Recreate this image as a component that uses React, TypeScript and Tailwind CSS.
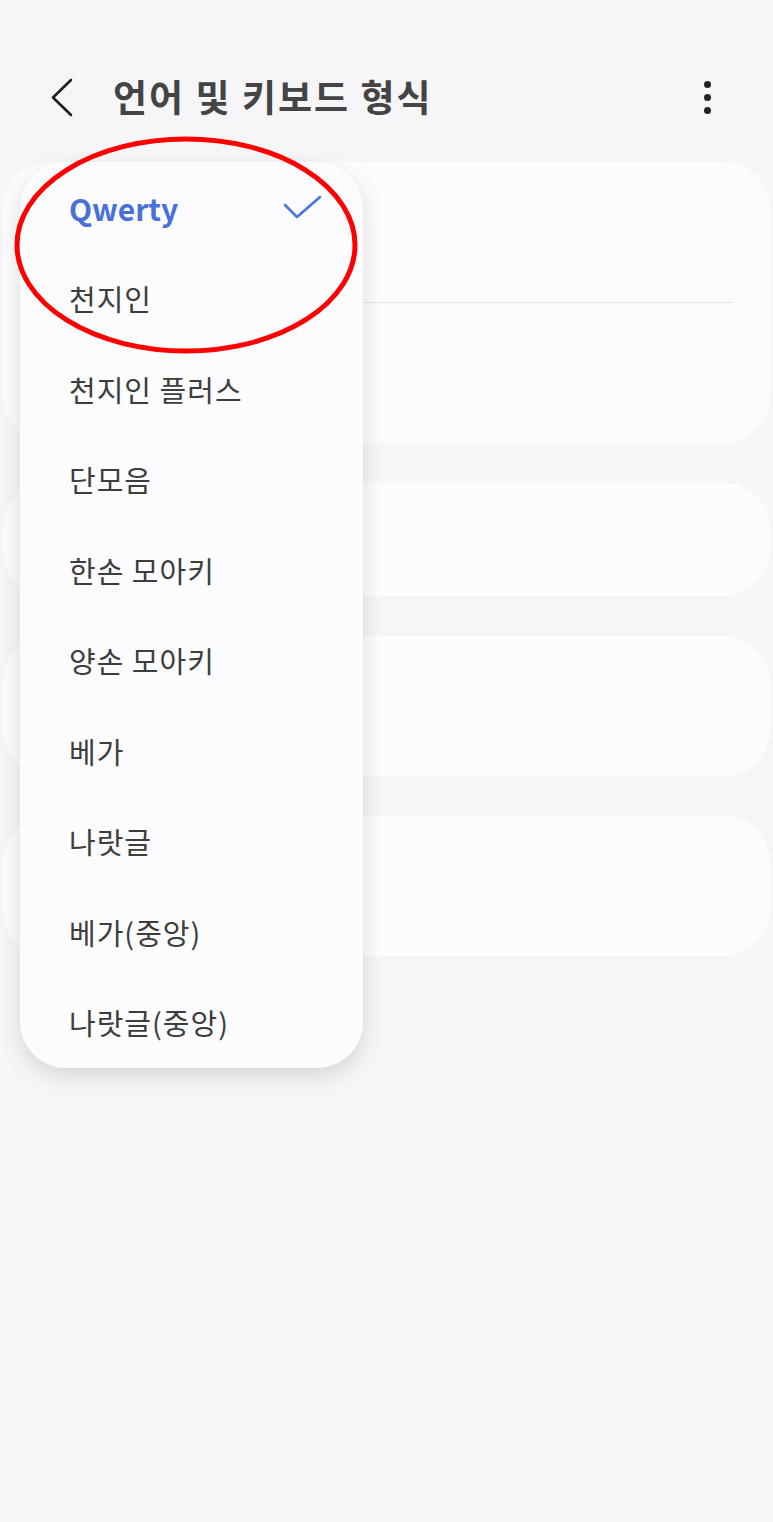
import React from "react"

const font = { fontFamily: '"Noto Sans CJK KR", "Noto Sans", sans-serif' }

const options = [
  "Qwerty",
  "천지인",
  "천지인 플러스",
  "단모음",
  "한손 모아키",
  "양손 모아키",
  "베가",
  "나랏글",
  "베가(중앙)",
  "나랏글(중앙)",
]

function Header() {
  return (
    <div className="mt-[62px] flex h-[70px] items-center">
      <button className="ml-[46px] flex h-[48px] w-[36px] items-center justify-center">
        <svg width="30" height="40" viewBox="0 0 30 40" fill="none">
          <path d="M22 3 L4 20.5 L22 38" stroke="#1f1f1f" strokeWidth="2.6" strokeLinecap="round" strokeLinejoin="round" />
        </svg>
      </button>
      <h1 className="ml-[31px] flex-1 text-[37px] font-bold tracking-[2px] text-[#444444]">언어 및 키보드 형식</h1>
      <button className="mr-[58px] flex h-[40px] w-[16px] flex-col items-center justify-center gap-[6px]">
        <span className="h-[7px] w-[7px] rounded-full bg-[#222222]" />
        <span className="h-[7px] w-[7px] rounded-full bg-[#222222]" />
        <span className="h-[7px] w-[7px] rounded-full bg-[#222222]" />
      </button>
    </div>
  )
}

function Cards() {
  return (
    <div className="flex flex-col gap-[40px] px-[3px] pt-[30px]">
      <div className="h-[281px] rounded-[46px] bg-[#fcfcfd]">
        <div className="mx-[37px] h-[141px] border-b border-[#e6e6ea]" />
      </div>
      <div className="h-[113px] rounded-[46px] bg-[#fcfcfd]" />
      <div className="h-[140px] rounded-[46px] bg-[#fcfcfd]" />
      <div className="h-[140px] rounded-[46px] bg-[#fcfcfd]" />
    </div>
  )
}

function Dropdown() {
  return (
    <div className="absolute left-[20px] top-[162px] w-[343px] rounded-[46px] bg-[#fcfcfe] pt-[1px] shadow-[0_8px_22px_rgba(0,0,0,0.13)]">
      {options.map((o, i) => (
        <div key={o} className="flex h-[90.5px] items-center justify-between pl-[49px] pr-[40px]">
          {i === 0 ? (
            <>
              <span className="text-[30px] font-bold text-[#4a70d9]">{o}</span>
              <svg width="40" height="26" viewBox="0 0 40 26" fill="none">
                <path d="M2 10 L14 22 L37 2" stroke="#4a74e0" strokeWidth="2.6" strokeLinecap="round" strokeLinejoin="round" />
              </svg>
            </>
          ) : (
            <span className="text-[29px] tracking-[1px] text-[#3d3d3d]">{o}</span>
          )}
        </div>
      ))}
    </div>
  )
}

export default function App() {
  return (
    <div className="relative h-[1522px] w-[773px] overflow-hidden bg-[#f6f6f8]" style={font}>
      <Header />
      <Cards />
      <Dropdown />
      <svg className="pointer-events-none absolute left-0 top-0" width="773" height="400" viewBox="0 0 773 400">
        <ellipse cx="186" cy="245" rx="169" ry="106" fill="none" stroke="#ff0000" strokeWidth="5" />
      </svg>
    </div>
  )
}
